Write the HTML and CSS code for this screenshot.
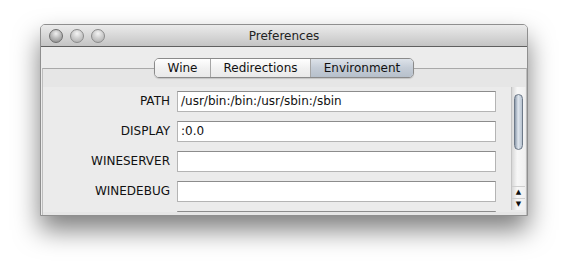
FILE: index.html
```html
<!DOCTYPE html>
<html lang="en">
<head>
    <meta charset="UTF-8">
    <title>Preferences</title>
    <link rel="stylesheet" href="styles.css">
</head>
<body>
    <div class="window">
        <div class="titlebar">
            <div class="lights">
                <span class="light"></span>
                <span class="light"></span>
                <span class="light"></span>
            </div>
            <div class="title">Preferences</div>
        </div>

        <div class="window-body">
            <!-- Segmented tab control -->
            <div class="tabs">
                <span class="tab tab-wine">Wine</span>
                <span class="tab tab-redir">Redirections</span>
                <span class="tab tab-env selected">Environment</span>
            </div>

            <div class="tabbox">
                <div class="scroll">
                    <div class="rows">
                        <div class="row">
                            <label>PATH</label>
                            <div class="field">/usr/bin:/bin:/usr/sbin:/sbin</div>
                        </div>
                        <div class="row">
                            <label>DISPLAY</label>
                            <div class="field">:0.0</div>
                        </div>
                        <div class="row">
                            <label>WINESERVER</label>
                            <div class="field"></div>
                        </div>
                        <div class="row">
                            <label>WINEDEBUG</label>
                            <div class="field"></div>
                        </div>
                        <div class="row">
                            <label></label>
                            <div class="field"></div>
                        </div>
                    </div>

                    <div class="scrollbar">
                        <div class="track">
                            <div class="knob"></div>
                        </div>
                        <div class="arrow">&#9650;</div>
                        <div class="arrow">&#9660;</div>
                    </div>
                </div>
            </div>
        </div>
    </div>
</body>
</html>
```

FILE: styles.css
```css
html, body {
    background-color: #ffffff;
}

body {
    margin: 0;
    min-height: 270px;
    padding-top: 24px;
    box-sizing: border-box;
    font-family: 'DejaVu Sans', 'Lucida Grande', sans-serif;
    font-size: 12px;
    color: #111;
}

/* Window frame */
.window {
    margin-left: 40px;
    width: 486px;
    height: 190px;
    border: 1px solid #8f8f8f;
    border-radius: 5px 5px 0 0;
    background-color: #ececec;
    box-shadow: 0 14px 26px rgba(0, 0, 0, 0.5);
    overflow: hidden;
    display: flex;
    flex-direction: column;
}

.titlebar {
    height: 21px;
    display: flex;
    align-items: center;
    background: linear-gradient(#ebebeb, #c4c4c4);
    border-bottom: 1px solid #5f5f5f;
    position: relative;
}

.lights {
    display: flex;
    gap: 7px;
    padding-left: 8px;
}

.light {
    width: 14px;
    height: 14px;
    border-radius: 50%;
    border: 1px solid #8a8a8a;
    box-sizing: border-box;
    background: radial-gradient(circle at 50% 30%, #f4f4f4 0%, #cfcfcf 45%, #a9a9a9 100%);
}

.light:first-child {
    background: radial-gradient(circle at 50% 30%, #f0f0f0 0%, #bcbcbc 45%, #858585 100%);
    border-color: #6e6e6e;
}

.title {
    position: absolute;
    left: 0;
    right: 0;
    top: 4px;
    text-align: center;
    color: #222;
}

.window-body {
    flex: 1;
    display: flex;
    flex-direction: column;
    padding: 11px 1px 0 1px;
}

/* Segmented control */
.tabs {
    align-self: center;
    display: flex;
    height: 20px;
    margin-bottom: -10px;
    border: 1px solid #8a8a8a;
    border-radius: 5px;
    box-sizing: border-box;
    overflow: hidden;
    position: relative;
    z-index: 1;
    box-shadow: 0 1px 1px rgba(0, 0, 0, 0.15);
}

.tab {
    display: flex;
    align-items: center;
    justify-content: center;
    background: linear-gradient(#ffffff, #f1f1f1 50%, #e9e9e9);
    border-left: 1px solid #a5a5a5;
}

.tab-wine {
    width: 55px;
    border-left: none;
}

.tab-redir {
    width: 99px;
}

.tab-env {
    width: 102px;
}

.tab.selected {
    background: linear-gradient(#dde2e9, #c4ccd6 50%, #b7c0cb);
}

/* Tab box */
.tabbox {
    flex: 1;
    border-top: 1px solid #a9a9a9;
    border-left: 1px solid #bdbdbd;
    border-right: 1px solid #bdbdbd;
    background-color: #e6e6e6;
    padding-top: 18px;
    margin-right: -1px;
}

.scroll {
    display: flex;
    height: 125px;
    background-color: #ebebeb;
    overflow: hidden;
}

.rows {
    flex: 1;
    margin-top: -1px;
}

.row {
    display: grid;
    grid-template-columns: 127px 319px;
    column-gap: 7px;
    height: 30px;
    align-items: center;
}

.row label {
    text-align: right;
}

.field {
    height: 21px;
    box-sizing: border-box;
    background-color: #ffffff;
    border: 1px solid #b4b4b4;
    border-top-color: #8c8c8c;
    padding: 2px 3px;
    line-height: 15px;
}

/* Scrollbar */
.scrollbar {
    width: 13px;
    margin-right: 1px;
    display: flex;
    flex-direction: column;
    background: linear-gradient(90deg, #d8d8d8, #f7f7f7 40%, #f0f0f0);
    border-left: 1px solid #c4c4c4;
    margin-bottom: 2px;
}

.track {
    flex: 1;
    padding-top: 7px;
}

.knob {
    width: 9px;
    height: 56px;
    margin-left: 2px;
    border-radius: 5px;
    border: 1px solid #6d7988;
    box-sizing: border-box;
    background: linear-gradient(90deg, #8c9aab, #dfe6ee 45%, #b7c2cf);
}

.arrow {
    height: 11px;
    font-size: 7px;
    line-height: 11px;
    text-align: center;
    color: #111;
    border-top: 1px solid #cfcfcf;
}
```
